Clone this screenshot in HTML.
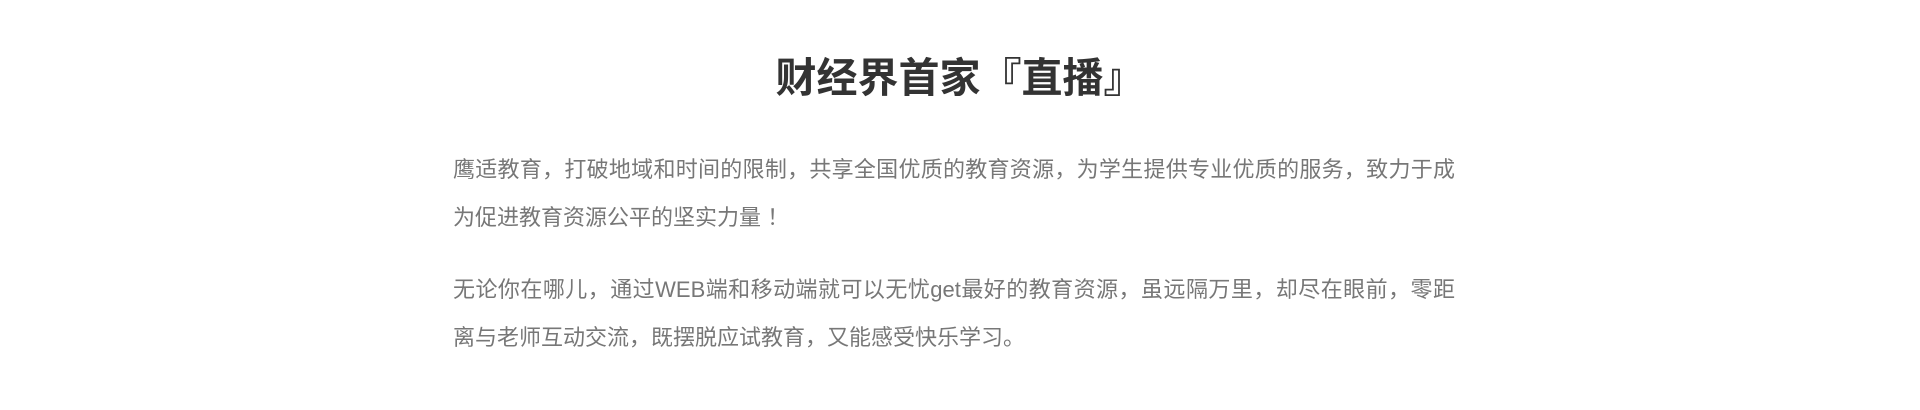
<!DOCTYPE html>
<html><head><meta charset="utf-8"><style>
html,body{margin:0;padding:0;background:#fff;width:1920px;height:410px;overflow:hidden}
body{font-family:"Liberation Sans","Noto Sans CJK SC",sans-serif}
h1{position:absolute;left:0;width:1920px;top:50px;margin:0;text-align:center;font-size:41px;line-height:56px;font-weight:bold;color:#333;letter-spacing:0}
.p{position:absolute;left:453px;width:1002px;color:#777;font-size:22px;line-height:48px}
.l{display:block;white-space:nowrap}
.j{text-align:justify;text-align-last:justify}
</style></head><body>
<h1>财经界首家『直播』</h1>
<div class="p" style="top:146px">
<span class="l j">鹰适教育，打破地域和时间的限制，共享全国优质的教育资源，为学生提供专业优质的服务，致力于成</span>
<span class="l">为促进教育资源公平的坚实力量 ！</span>
</div>
<div class="p" style="top:266px">
<span class="l j">无论你在哪儿，通过WEB端和移动端就可以无忧get最好的教育资源，虽远隔万里，却尽在眼前，零距</span>
<span class="l">离与老师互动交流，既摆脱应试教育，又能感受快乐学习。</span>
</div>
</body></html>
